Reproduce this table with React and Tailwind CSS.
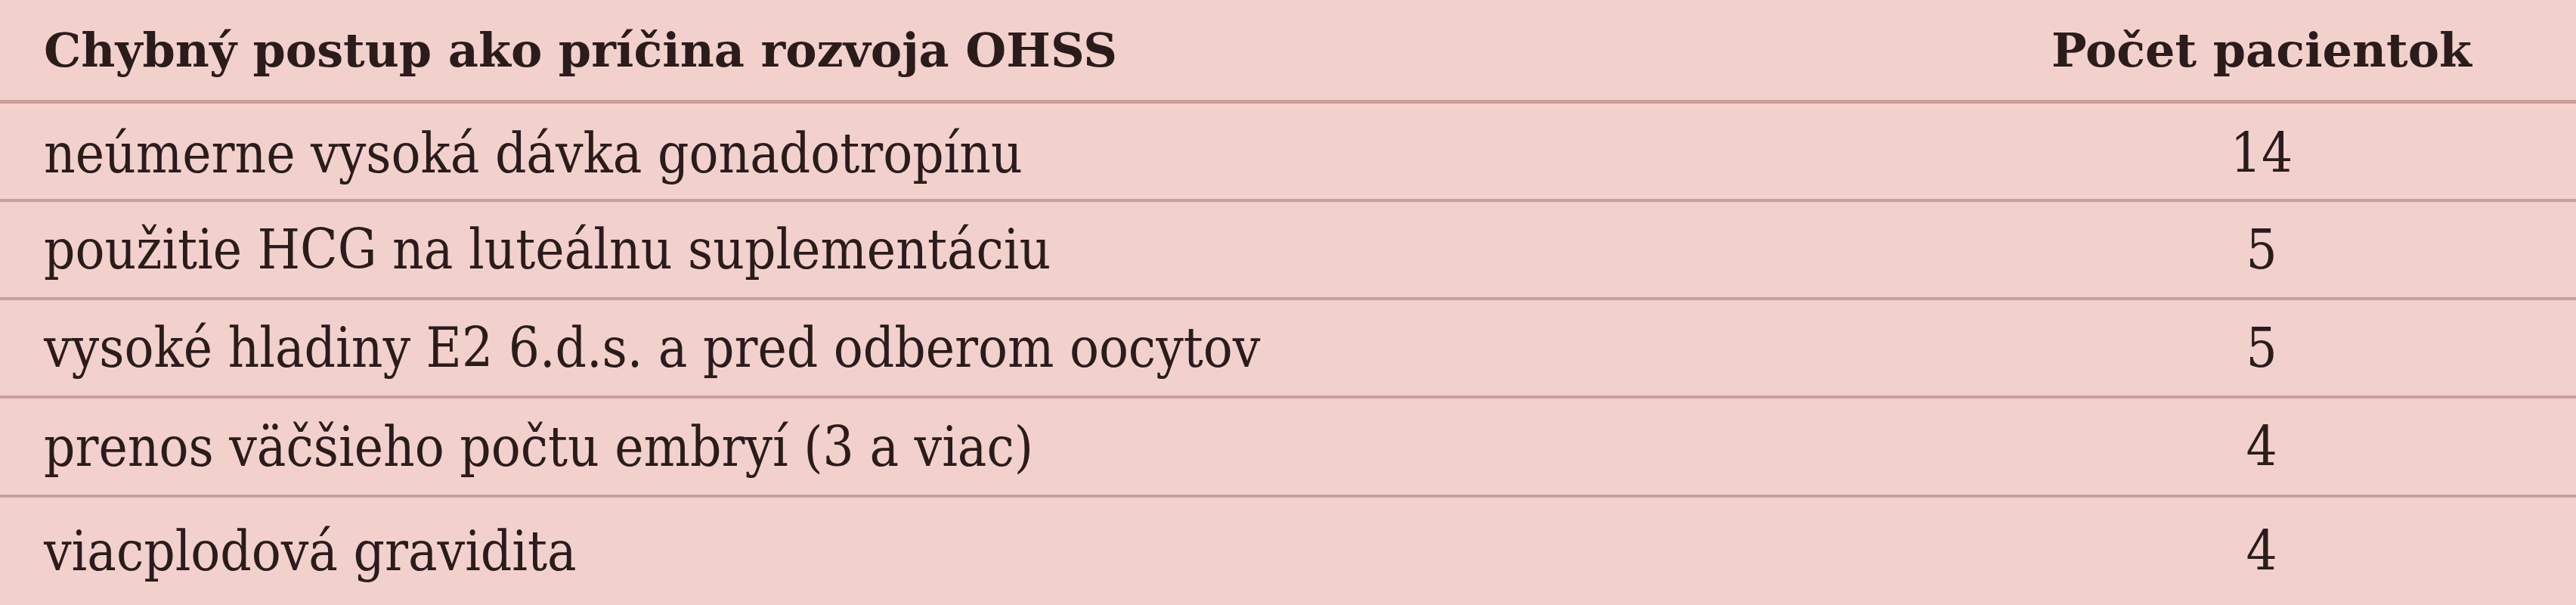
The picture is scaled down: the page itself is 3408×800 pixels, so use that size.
const rows = [
  { cause: 'neúmerne vysoká dávka gonadotropínu', count: 14, h: 'h-[124px] border-b-[4px]' },
  { cause: 'použitie HCG na luteálnu suplementáciu', count: 5, h: 'h-[130px] border-b-[4px]' },
  { cause: 'vysoké hladiny E2 6.d.s. a pred odberom oocytov', count: 5, h: 'h-[130px] border-b-[4px]' },
  { cause: 'prenos väčšieho počtu embryí (3 a viac)', count: 4, h: 'h-[131px] border-b-[4px]' },
  { cause: 'viacplodová gravidita', count: 4, h: 'flex-1' },
];

export default function App() {
  return (
    <div className="h-[800px] w-[3408px] bg-[#f2d1cc] text-[#2b1c1c] flex flex-col font-['DejaVu_Serif',serif]">
      {/* header */}
      <div className="h-[132px] shrink-0 flex items-center text-[62px] font-bold">
        <div className="flex-1 pl-[58px]">Chybný postup ako príčina rozvoja OHSS</div>
        <div className="w-[832px] text-center">Počet pacientok</div>
      </div>
      <div className="h-[5px] bg-[#c99f9e] shrink-0" />
      <div className="h-[6px] bg-[#f7cfcb] shrink-0" />

      {rows.map((r, i) => (
        <div key={i} className={`${r.h} shrink-0 border-[#c99f9e] flex items-center text-[72px] font-['DejaVu_Serif_Condensed','DejaVu_Serif',serif] [font-stretch:condensed]`}>
          <div className="flex-1 pl-[58px]">{r.cause}</div>
          <div className="w-[832px] text-center">{r.count}</div>
        </div>
      ))}
    </div>
  );
}
